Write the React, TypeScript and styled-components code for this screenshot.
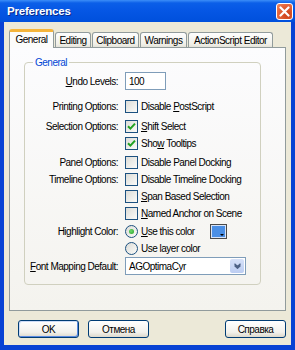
import * as React from "react";
import styled, { createGlobalStyle } from "styled-components";

const GlobalStyle = createGlobalStyle`
  html, body {
    margin: 0;
    padding: 0;
  }
  body {
    font-family: "Liberation Sans", Arial, sans-serif;
    font-size: 10px;
    letter-spacing: -0.5px;
    color: #000;
  }
`;

const tabs = [
  { label: "General", w: 45 },
  { label: "Editing", w: 36 },
  { label: "Clipboard", w: 47 },
  { label: "Warnings", w: 47 },
  { label: "ActionScript Editor", w: 85 },
];

export default function App() {
  return (
    <>
      <GlobalStyle />
      <Window>
        <TitleBar>
          <Title>Preferences</Title>
          <CloseButton>
            <svg width="11" height="11" viewBox="0 0 11 11">
              <path d="M1.5 1.5 L9.5 9.5 M9.5 1.5 L1.5 9.5" stroke="#fff" strokeWidth="2.2" strokeLinecap="round" />
            </svg>
          </CloseButton>
        </TitleBar>
        <Client>
          <TabStrip>
            {tabs.map((t, i) => (
              <Tab key={t.label} active={i === 0} w={t.w}>
                {t.label}
              </Tab>
            ))}
          </TabStrip>
          <Panel>
            <Group>
              <Legend>General</Legend>
              <Row mt={3} h={18}>
                <Label><u>U</u>ndo Levels:</Label>
                <TextInput>100</TextInput>
              </Row>
              <Row mt={8}>
                <Label>Printing Options:</Label>
                <Option><CheckBox /><span>Disable <u>P</u>ostScript</span></Option>
              </Row>
              <Row mt={3}>
                <Label>Selection Options:</Label>
                <Option><CheckBox checked /><span><u>S</u>hift Select</span></Option>
              </Row>
              <Row>
                <span />
                <Option><CheckBox checked /><span>Sho<u>w</u> Tooltips</span></Option>
              </Row>
              <Row mt={2}>
                <Label>Panel Options:</Label>
                <Option><CheckBox /><span>Disable Panel Docking</span></Option>
              </Row>
              <Row>
                <Label>Timeline Options:</Label>
                <Option><CheckBox /><span>Disable Timeline Docking</span></Option>
              </Row>
              <Row>
                <span />
                <Option><CheckBox /><span><u>S</u>pan Based Selection</span></Option>
              </Row>
              <Row>
                <span />
                <Option><CheckBox /><span><u>N</u>amed Anchor on Scene</span></Option>
              </Row>
              <Row mt={1}>
                <Label>Highlight Color:</Label>
                <ControlLine>
                  <Option><Radio checked /><span><u>U</u>se this color</span></Option>
                  <Swatch />
                </ControlLine>
              </Row>
              <Row>
                <span />
                <Option><Radio /><span>Use layer color</span></Option>
              </Row>
              <Row h={18}>
                <Label><u>F</u>ont Mapping Default:</Label>
                <Select>
                  <SelectText>AGOptimaCyr</SelectText>
                  <SelectButton>
                    <svg width="7" height="6" viewBox="0 0 7 6">
                      <path d="M0.5 0.8 L3.5 3.6 L6.5 0.8 M0.5 2.6 L3.5 5.3 L6.5 2.6" stroke="#4d6185" strokeWidth="1.3" fill="none" />
                    </svg>
                  </SelectButton>
                </Select>
              </Row>
            </Group>
          </Panel>
          <ButtonRow>
            <Button isDefault>OK</Button>
            <Button>Отмена</Button>
            <Spacer />
            <Button>Справка</Button>
          </ButtonRow>
        </Client>
      </Window>
    </>
  );
}

const CheckBox = ({ checked }: { checked?: boolean }) => (
  <Box>
    {checked && (
      <svg width="9" height="9" viewBox="0 0 9 9">
        <path d="M1 4.2 L3.4 6.6 L8 1.6" stroke="#21a121" strokeWidth="2" fill="none" />
      </svg>
    )}
  </Box>
);

const Radio = ({ checked }: { checked?: boolean }) => (
  <RadioCircle>{checked && <Dot />}</RadioCircle>
);

const Window = styled.div`
  width: 295px;
  height: 350px;
  box-sizing: border-box;
  display: flex;
  flex-direction: column;
  background: #0842d4;
`;

const TitleBar = styled.div`
  height: 22px;
  display: flex;
  align-items: center;
  justify-content: space-between;
  padding: 0 2px 0 7px;
  background: linear-gradient(#3c8ef8 0, #0b5fe8 3px, #0556e4 50%, #0050dc 100%);
`;

const Title = styled.div`
  color: #fff;
  font-weight: bold;
  font-size: 11.5px;
  letter-spacing: -0.2px;
  text-shadow: 1px 1px #0a2a8a;
`;

const CloseButton = styled.div`
  width: 17px;
  height: 17px;
  margin-top: 1px;
  box-sizing: border-box;
  border: 1px solid #fff;
  border-radius: 3px;
  display: flex;
  align-items: center;
  justify-content: center;
  background: radial-gradient(circle at 70% 70%, #c93d16, #e5643a 60%, #f08a62);
`;

const Client = styled.div`
  flex: 1;
  margin: 0 4px 5px 4px;
  background: #ece9d8;
  display: flex;
  flex-direction: column;
  padding: 7px 5px 7px 5px;
`;

const TabStrip = styled.div`
  display: flex;
  align-items: flex-end;
  height: 18px;
  gap: 1px;
  position: relative;
  z-index: 1;
`;

const Tab = styled.div<{ active?: boolean; w: number }>`
  width: ${(p) => p.w}px;
  box-sizing: border-box;
  height: ${(p) => (p.active ? 19 : 15)}px;
  margin-bottom: ${(p) => (p.active ? -1 : 0)}px;
  border: 1px solid #919b9c;
  border-bottom: none;
  border-top: ${(p) => (p.active ? "3px solid #f5b53b" : "1px solid #919b9c")};
  border-radius: 3px 3px 0 0;
  background: ${(p) => (p.active ? "#fcfcfa" : "linear-gradient(#fefefe, #f0efe8 80%, #e4e2d8)")};
  display: flex;
  align-items: center;
  justify-content: center;
  white-space: nowrap;
  padding-bottom: ${(p) => (p.active ? 2 : 0)}px;
`;

const Panel = styled.div`
  flex: 1;
  box-sizing: border-box;
  border: 1px solid #919b9c;
  background: linear-gradient(#fcfcfe, #f4f3ee);
  padding: 8px 24px 25px 14px;
  display: flex;
  flex-direction: column;
`;

const Group = styled.fieldset`
  flex: 1;
  margin: 0;
  min-width: 0;
  border: 1px solid #d0d0bf;
  border-radius: 4px;
  padding: 0 4px 4px 3px;
`;

const Legend = styled.legend`
  color: #0046d5;
  padding: 0 2px;
  margin-left: 5px;
  line-height: 13px;
`;

const Row = styled.div<{ mt?: number; h?: number }>`
  display: grid;
  grid-template-columns: 90px 1fr;
  column-gap: 7px;
  align-items: center;
  height: ${(p) => p.h ?? 17}px;
  margin-top: ${(p) => p.mt ?? 0}px;
`;

const Label = styled.div`
  text-align: right;
  white-space: nowrap;
  direction: rtl;
  unicode-bidi: plaintext;
`;

const ControlLine = styled.div`
  display: flex;
  align-items: center;
  gap: 15px;
`;

const Option = styled.div`
  display: flex;
  align-items: center;
  gap: 3px;
  white-space: nowrap;
`;

const Box = styled.div`
  width: 13px;
  height: 13px;
  box-sizing: border-box;
  border: 1px solid #1c5180;
  background: linear-gradient(135deg, #dcdcd7, #fbfbf9);
  display: flex;
  align-items: center;
  justify-content: center;
  flex: none;
`;

const RadioCircle = styled.div`
  width: 13px;
  height: 13px;
  box-sizing: border-box;
  border: 1px solid #1c5180;
  border-radius: 50%;
  background: linear-gradient(135deg, #dcdcd7, #fbfbf9);
  display: flex;
  align-items: center;
  justify-content: center;
  flex: none;
`;

const Dot = styled.div`
  width: 5px;
  height: 5px;
  border-radius: 50%;
  background: radial-gradient(circle at 40% 40%, #6fd86f, #21a121);
`;

const Swatch = styled.div`
  width: 17px;
  height: 15px;
  box-sizing: border-box;
  border: 1px solid #4a4a4a;
  box-shadow: inset 0 0 0 1px #d8e4f8;
  background: #4a8fe6;
  position: relative;
  &::after {
    content: "";
    position: absolute;
    right: 2px;
    bottom: 2px;
    border-left: 2px solid transparent;
    border-right: 2px solid transparent;
    border-top: 2px solid #000;
  }
`;

const TextInput = styled.div`
  width: 41px;
  height: 18px;
  box-sizing: border-box;
  border: 1px solid #7f9db9;
  background: #fff;
  padding-left: 3px;
  display: flex;
  align-items: center;
`;

const Select = styled.div`
  width: 121px;
  height: 18px;
  box-sizing: border-box;
  border: 1px solid #7f9db9;
  background: #fff;
  display: flex;
  align-items: stretch;
  padding: 1px;
`;

const SelectText = styled.div`
  flex: 1;
  padding-left: 2px;
  display: flex;
  align-items: center;
`;

const SelectButton = styled.div`
  width: 14px;
  border-radius: 2px;
  background: linear-gradient(#d6e1f8, #bccdf2);
  display: flex;
  align-items: center;
  justify-content: center;
`;

const ButtonRow = styled.div`
  display: flex;
  align-items: center;
  gap: 9px;
  margin-top: 9px;
  padding: 0 0 0 9px;
`;

const Spacer = styled.div`
  flex: 1;
`;

const Button = styled.div<{ isDefault?: boolean }>`
  width: 61px;
  height: 18px;
  box-sizing: border-box;
  border: 1px solid #003c74;
  border-radius: 3px;
  background: linear-gradient(#ffffff, #f2f1ec 70%, #dcd8cc);
  box-shadow: ${(p) => (p.isDefault ? "inset -1px -1px 0 #5a8ae0, inset 1px 1px 0 #cddcf7" : "none")};
  display: flex;
  align-items: center;
  justify-content: center;
`;
